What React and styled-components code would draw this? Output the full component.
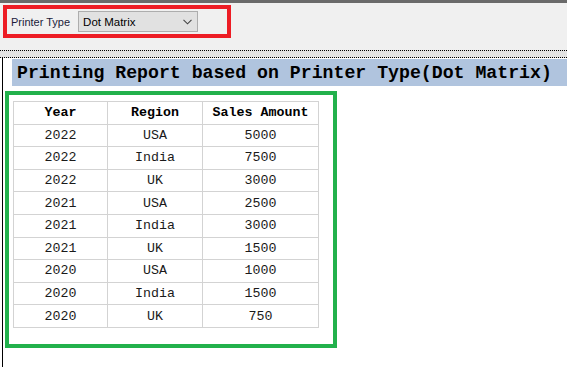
import React from "react";
import styled, { createGlobalStyle } from "styled-components";

const sales = [
    { year: 2022, region: "USA", amount: 5000 },
    { year: 2022, region: "India", amount: 7500 },
    { year: 2022, region: "UK", amount: 3000 },
    { year: 2021, region: "USA", amount: 2500 },
    { year: 2021, region: "India", amount: 3000 },
    { year: 2021, region: "UK", amount: 1500 },
    { year: 2020, region: "USA", amount: 1000 },
    { year: 2020, region: "India", amount: 1500 },
    { year: 2020, region: "UK", amount: 750 },
];

export default function App() {
    const printerType = "Dot Matrix";

    return (
        <>
            <GlobalStyle />
            <Page>
                <Toolbar>
                    <FilterBox>
                        <FilterLabel>Printer Type</FilterLabel>
                        <SelectBox>
                            <span>{printerType}</span>
                            <svg width="9" height="6" viewBox="0 0 9 6">
                                <polyline points="0.5,0.8 4.5,4.8 8.5,0.8" fill="none" stroke="#444" strokeWidth="1.1" />
                            </svg>
                        </SelectBox>
                    </FilterBox>
                </Toolbar>
                <Splitter />
                <ReportArea>
                    <ReportTitle>Printing Report based on Printer Type({printerType})</ReportTitle>
                    <Highlight>
                        <SalesTable>
                            <thead>
                                <tr>
                                    <HeadCell>Year</HeadCell>
                                    <HeadCell>Region</HeadCell>
                                    <HeadCell>Sales Amount</HeadCell>
                                </tr>
                            </thead>
                            <tbody>
                                {sales.map((row, i) => (
                                    <tr key={i}>
                                        <Cell>{row.year}</Cell>
                                        <Cell>{row.region}</Cell>
                                        <Cell>{row.amount}</Cell>
                                    </tr>
                                ))}
                            </tbody>
                        </SalesTable>
                    </Highlight>
                </ReportArea>
            </Page>
        </>
    );
}

const GlobalStyle = createGlobalStyle`
html, body {
    margin: 0;
    padding: 0;
    background: #ffffff;
}
`

const Page = styled.div`
width: 567px;
height: 367px;
overflow: hidden;
display: flex;
flex-direction: column;
background: #ffffff;
`

const Toolbar = styled.div`
height: 47px;
background: #f0f0f0;
border-top: 3px solid #6a6a6a;
display: flex;
align-items: flex-start;
padding-left: 3px;
`

const FilterBox = styled.div`
margin-top: 2px;
width: 216px;
height: 25px;
border: 4px solid #ed1c24;
display: flex;
align-items: center;
gap: 8px;
padding-left: 4px;
box-sizing: content-box;
`

const FilterLabel = styled.span`
font-family: "Liberation Sans", Arial, sans-serif;
font-size: 11px;
color: #1b1b3a;
`

const SelectBox = styled.div`
width: 120px;
height: 21px;
box-sizing: border-box;
border: 1px solid #adadad;
background: #e1e1e1;
display: flex;
align-items: center;
justify-content: space-between;
padding: 0 5px 0 4px;
font-family: "Liberation Sans", Arial, sans-serif;
font-size: 11.5px;
color: #000;
`

const Splitter = styled.div`
height: 6px;
background: #e3e3e3;
border-top: 1px dotted #000;
border-bottom: 1px dotted #000;
`

const ReportArea = styled.div`
flex: 1;
margin-left: 2px;
border-left: 1px solid #000;
padding-top: 1px;
display: flex;
flex-direction: column;
align-items: flex-start;
`

const ReportTitle = styled.div`
align-self: stretch;
margin-left: 9px;
height: 27px;
background: #b0c4de;
display: flex;
align-items: center;
padding-left: 5px;
font-family: "Liberation Mono", "Courier New", monospace;
font-weight: bold;
font-size: 18.2px;
color: #000;
white-space: nowrap;
`

const Highlight = styled.div`
margin-top: 5px;
margin-left: 2px;
border: 4px solid #22b14c;
padding: 6px 14px 16px 4px;
`

const SalesTable = styled.table`
border-collapse: collapse;
font-family: "Liberation Mono", "Courier New", monospace;
font-size: 13.3px;
`

const HeadCell = styled.th`
border: 1px solid #d3d3d3;
height: 21.6px;
padding: 0;
font-weight: bold;
color: #000;
text-align: center;
&:nth-child(1) { width: 93px; }
&:nth-child(2) { width: 94px; }
&:nth-child(3) { width: 115px; }
`

const Cell = styled.td`
border: 1px solid #d3d3d3;
height: 21.6px;
padding: 0;
color: #1a1a1a;
text-align: center;
`
